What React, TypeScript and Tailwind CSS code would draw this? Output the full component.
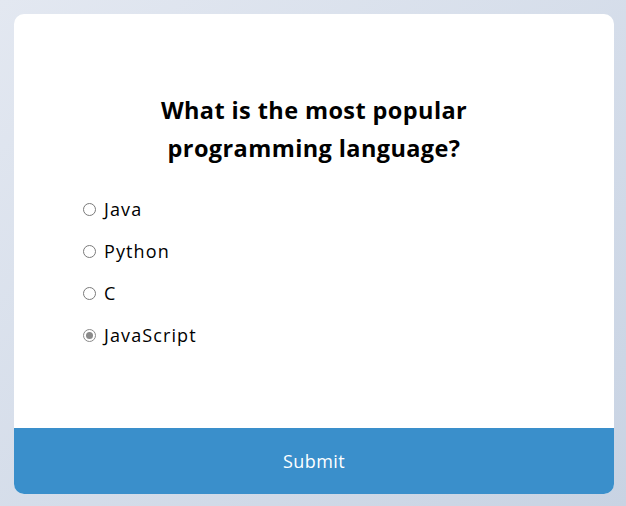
import React from "react";

const options = ["Java", "Python", "C", "JavaScript"];

export default function App() {
  const selected = "JavaScript";
  return (
    <div
      className="min-h-screen w-full bg-gradient-to-br from-[#e3e8f1] to-[#c8d3e3] p-[14px]"
      style={{ fontFamily: '"Open Sans", "Noto Sans", sans-serif' }}
    >
      <div className="flex h-[480px] w-[600px] flex-col overflow-hidden rounded-[10px] bg-white">
        <div className="flex-1 px-[69px] pt-[77px]">
          <h2 className="text-center text-[23.5px] font-bold leading-[38px] tracking-[0.4px] text-black">
            What is the most popular
            <br />
            programming language?
          </h2>
          <ul className="mt-[31px] flex flex-col gap-[20px]">
            {options.map((o) => (
              <li key={o} className="flex h-[22px] items-center">
                <span
                  className={`flex h-[13px] w-[13px] shrink-0 items-center justify-center rounded-full border ${
                    o === selected ? "border-[#8a8a8a]" : "border-[#7a7a7a]"
                  } bg-white`}
                >
                  {o === selected && (
                    <span className="h-[7px] w-[7px] rounded-full bg-[#8a8a8a]" />
                  )}
                </span>
                <span className="ml-[8px] text-[18px] tracking-[1.1px] text-black">{o}</span>
              </li>
            ))}
          </ul>
        </div>
        <button className="h-[66px] w-full bg-[#3a8fcb] text-[18px] tracking-[0.4px] text-white">
          Submit
        </button>
      </div>
    </div>
  );
}
